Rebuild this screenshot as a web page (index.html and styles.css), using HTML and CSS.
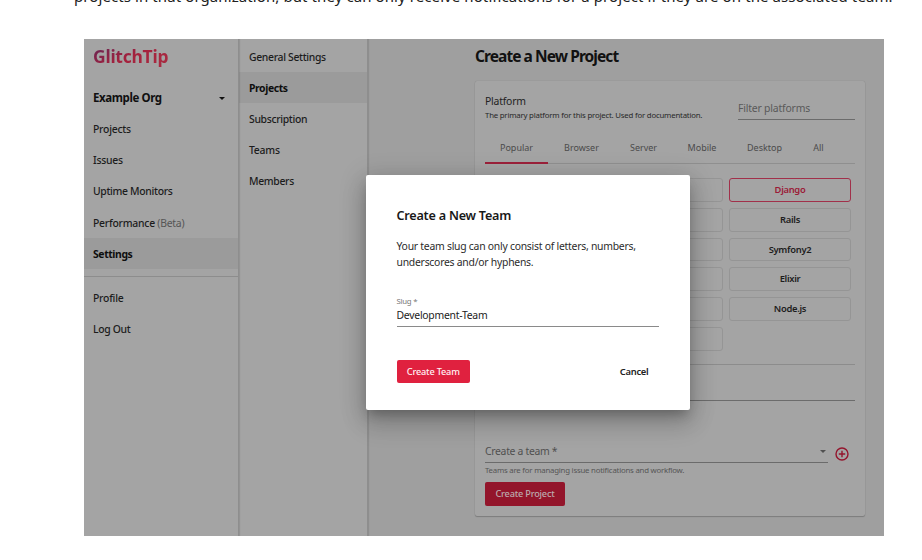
FILE: index.html
```html
<!DOCTYPE html>
<html lang="en">
<head>
<meta charset="utf-8">
<title>GlitchTip</title>
<link rel="stylesheet" href="styles.css">
</head>
<body>
<p class="article-text"><span>projects in that organization, but they can only receive notifications for a project if they are on the associated team.</span></p>
<div class="app">
  <nav class="sidebar">
    <div class="logo"><span>GlitchTip</span></div>
    <div class="org"><span>Example Org</span><i class="caret"></i></div>
    <a class="item"><span>Projects</span></a>
    <a class="item"><span>Issues</span></a>
    <a class="item tight"><span>Uptime Monitors</span></a>
    <a class="item"><span>Performance <small>(Beta)</small></span></a>
    <a class="item active"><span>Settings</span></a>
    <div class="rule"></div>
    <a class="item"><span>Profile</span></a>
    <a class="item tight"><span>Log Out</span></a>
  </nav>
  <nav class="subnav">
    <a class="item tight"><span>General Settings</span></a>
    <a class="item active"><span>Projects</span></a>
    <a class="item tight"><span>Subscription</span></a>
    <a class="item"><span>Teams</span></a>
    <a class="item tight"><span>Members</span></a>
  </nav>
  <main class="content">
    <h1><span>Create a New Project</span></h1>
    <section class="card">
      <header class="card-head">
        <div>
          <div class="platform"><span>Platform</span></div>
          <div class="hint"><span>The primary platform for this project. Used for documentation.</span></div>
        </div>
        <div class="filter"><span>Filter platforms</span></div>
      </header>
      <div class="tabs">
        <div class="tab selected">Popular</div><div class="tab">Browser</div><div class="tab">Server</div><div class="tab">Mobile</div><div class="tab">Desktop</div><div class="tab">All</div>
      </div>
      <div class="grid">
        <b></b><b></b><b class="chosen">Django</b>
        <b></b><b></b><b>Rails</b>
        <b></b><b></b><b>Symfony2</b>
        <b></b><b></b><b>Elixir</b>
        <b></b><b></b><b>Node.js</b>
        <b></b><b></b>
      </div>
      <div class="name-field"></div>
      <div class="team-row">
        <div class="team-select"><span>Create a team *</span><i class="caret"></i></div>
        <svg width="14" height="14" viewBox="0 0 14 14" fill="none" stroke="#94152d" stroke-width="1.4"><circle cx="7" cy="7" r="6"/><path d="M7 3.8v6.4M3.8 7h6.4"/></svg>
      </div>
      <div class="team-hint"><span>Teams are for managing issue notifications and workflow.</span></div>
      <div class="btn dim"><span>Create Project</span></div>
    </section>
  </main>
  <div class="dialog">
    <h2><span>Create a New Team</span></h2>
    <p><span>Your team slug can only consist of letters, numbers,</span><br><span>underscores and/or hyphens.</span></p>
    <div class="slug-label"><span>Slug *</span></div>
    <div class="slug-value"><span>Development-Team</span></div>
    <div class="actions"><div class="btn"><span>Create Team</span></div><span class="cancel">Cancel</span></div>
  </div>
</div>
</body>
</html>
```
FILE: styles.css
```css
* { box-sizing: border-box; }
body { margin: 0; width: 922px; height: 560px; overflow: hidden; background: #fff; color: #222; font-family: "Noto Sans", "Open Sans", sans-serif; font-size: 10px; white-space: nowrap; }
.article-text { margin: -16px 0 0 74px; height: 24px; line-height: 24px; font-size: 15px; letter-spacing: .09px; color: #202020; }
.app { position: relative; display: flex; width: 800px; height: 497px; margin: 31px 0 0 84px; background: #9f9f9f; overflow: hidden; }
.sidebar, .subnav { background: #a4a4a4; border-right: 1px solid #8e8e8e; box-shadow: 1px 0 1px rgba(0,0,0,.1); flex: none; z-index: 1; }
.sidebar { width: 155px; z-index: 2; }
.subnav { width: 129px; padding-top: 2px; }
.logo { height: 42.4px; padding: 5px 0 0 9px; line-height: 24px; font-size: 17.5px; font-weight: 700; letter-spacing: -.25px; }
.logo span { color: transparent; background: linear-gradient(155deg, #73244f 15%, #a4213d 50%, #a82940 80%); background-clip: text; -webkit-background-clip: text; }
.org { height: 32px; display: flex; align-items: center; justify-content: space-between; padding: 0 13px 0 9px; font-size: 11.5px; font-weight: 700; letter-spacing: -.4px; color: #101010; }
.caret { border: 3px solid transparent; border-top-color: currentColor; border-bottom: 0; margin-top: 3px; }
.item { height: 31.2px; display: flex; align-items: center; padding-left: 9px; font-size: 10.4px; font-weight: 500; letter-spacing: -.24px; color: #1c1c1c; }
.item.tight { letter-spacing: -.33px; }
.item small { font-size: inherit; font-weight: 400; color: #555; }
.item.active { background: #9b9b9b; font-weight: 700; letter-spacing: -.4px; color: #0e0e0e; }
.subnav .item { padding-left: 10px; }
.rule { height: 1px; margin: 7px 0 5px; background: #8d8d8d; }
.content { width: 516px; padding-left: 107px; }
h1 { height: 42px; margin: 0; padding-top: 5px; font-size: 15.5px; line-height: 24px; font-weight: 700; letter-spacing: -.93px; color: #111; }
.card { width: 390px; height: 435px; padding: 13px 10px 0 10px; background: #a4a4a4; border-radius: 2px; box-shadow: 0 1px 1px rgba(0,0,0,.2), 0 0 1px rgba(0,0,0,.2); }
.card-head { display: flex; justify-content: space-between; height: 39px; }
.platform { font-size: 10.4px; line-height: 15px; letter-spacing: -.2px; }
.hint { font-size: 7.8px; line-height: 13px; letter-spacing: -.2px; color: #282828; }
.filter { width: 117px; height: 26px; border-bottom: 1px solid #6b6b6b; padding-top: 7px; line-height: 14px; font-size: 10.4px; letter-spacing: -.18px; color: #595959; }
.tabs { display: flex; height: 31px; border-bottom: 1px solid #8f8f8f; font-size: 9px; color: #4b4b4b; }
.tab { width: 63px; text-align: center; line-height: 29px; height: 31px; }
.tab.selected { border-bottom: 2px solid #9c203a; }
.tab:nth-child(2) { width: 67px; }
.tab:nth-child(3) { width: 57px; }
.tab:nth-child(4) { width: 60px; }
.tab:nth-child(5) { width: 65px; }
.tab:nth-child(6) { width: 43px; }
.grid { display: grid; grid-template-columns: 115px 116px 122px; column-gap: 6.5px; row-gap: 6px; grid-auto-rows: 23.8px; padding-top: 14px; height: 201px; border-bottom: 1px solid #8c8c8c; }
.grid b { border: 1px solid #959595; border-radius: 3px; line-height: 21px; text-align: center; font-size: 9.4px; font-weight: 600; letter-spacing: -.3px; color: #1d1d1d; }
.grid .chosen { border-color: #a1304a; color: #9b1b37; }
.name-field { height: 36px; border-bottom: 1px solid #6c6c6c; }
.team-row { display: flex; height: 62px; align-items: flex-end; gap: 7px; }
.team-row svg { margin-bottom: 2px; }
.team-select { display: flex; align-items: center; justify-content: space-between; width: 343px; height: 23px; padding-right: 2px; border-bottom: 1px solid #6b6b6b; font-size: 10.4px; letter-spacing: -.3px; color: #505050; }
.team-select .caret { margin-top: 1px; }
.team-hint { height: 19px; line-height: 14px; font-size: 7.8px; letter-spacing: -.21px; color: #555; }
.btn { display: flex; align-items: center; justify-content: center; width: 73.5px; height: 23.5px; border-radius: 2px; background: #e0213f; color: #fff0f2; font-size: 9.2px; font-weight: 500; letter-spacing: -.2px; }
.btn.dim { width: 80px; background: #93152b; color: #bcaaad; }
.dialog { position: absolute; z-index: 3; left: 281.5px; top: 136px; width: 324px; height: 234.5px; padding: 31px 31px 0; background: #fff; border-radius: 2px; box-shadow: 0 7px 10px -3px rgba(0,0,0,.22), 0 14px 24px 2px rgba(0,0,0,.14), 0 4px 24px 5px rgba(0,0,0,.12); }
h2 { margin: 0; font-size: 12.6px; line-height: 20px; font-weight: 600; letter-spacing: -.22px; color: #181818; }
.dialog p { margin: 13px 0 0; font-size: 10.4px; line-height: 15.6px; letter-spacing: -.25px; color: #2b2b2b; }
.slug-label { margin-top: 25.6px; font-size: 7.8px; line-height: 10px; letter-spacing: -.25px; color: #777; }
.slug-value { height: 21px; width: 262px; border-bottom: 1px solid #8a8a8a; font-size: 10.4px; line-height: 19px; letter-spacing: -.25px; }
.actions { display: flex; justify-content: space-between; align-items: center; margin-top: 33px; }
.cancel { padding-right: 10px; font-size: 9.4px; font-weight: 600; letter-spacing: -.25px; }
```
